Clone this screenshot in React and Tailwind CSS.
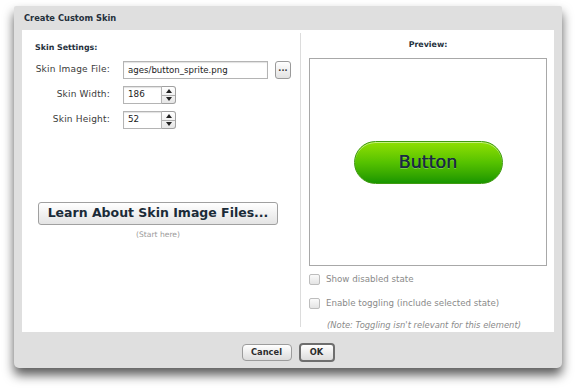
export default function App() {
  return (
    <div className="w-[575px] h-[390px] bg-white overflow-hidden font-['DejaVu_Sans',sans-serif]">
      <div className="flex">
        <div className="ml-[14px] mt-[6px] w-[548px] h-[362px] bg-[#dfdfdf] rounded-t-[2px] rounded-b-[5px] shadow-[0_7px_11px_rgba(0,0,0,0.65)] flex flex-col">

          {/* TITLE */}
          <div className="h-[24px] flex items-center pl-[10px] text-[8.3px] font-bold text-[#25303c]">
            Create Custom Skin
          </div>

          {/* BODY */}
          <div className="mx-[8px] h-[302px] bg-white flex">

            {/* LEFT */}
            <div className="w-[278px] flex flex-col pl-[13px] pt-[13px]">
              <div className="text-[7.9px] leading-[10px] font-bold text-[#25303c]">Skin Settings:</div>

              <div className="mt-[8px] grid grid-cols-[75px_auto] gap-x-[13px] gap-y-[7px] text-[9px] tracking-[0.2px] text-[#3a3a3a]">
                <div className="h-[18px] flex items-center justify-end">Skin Image File:</div>
                <div className="h-[18px] flex items-center gap-[7px]">
                  <div className="w-[145px] h-[18px] border border-[#b4b4b4] shadow-[inset_0_1px_1px_rgba(0,0,0,0.12)] flex items-center pl-[4px] text-[8.6px] tracking-normal text-[#222]">
                    ages/button_sprite.png
                  </div>
                  <div className="w-[16px] h-[18px] rounded-[3px] border border-[#9a9a9a] bg-gradient-to-b from-white to-[#e2e2e2] flex items-center justify-center text-[8px] font-bold leading-none pb-[3px] text-[#333]">
                    ...
                  </div>
                </div>

                <div className="h-[18px] flex items-center justify-end">Skin Width:</div>
                <Spin value="186" />

                <div className="h-[18px] flex items-center justify-end">Skin Height:</div>
                <Spin value="52" />
              </div>

              <button className="mt-[73px] ml-[3px] w-[240px] h-[23px] rounded-[3px] border border-[#a0a0a0] bg-gradient-to-b from-white to-[#e4e4e4] text-[12.5px] font-bold text-[#1b2b38] flex items-center justify-center">
                Learn About Skin Image Files...
              </button>
              <div className="ml-[3px] w-[240px] mt-[4px] text-center text-[7.6px] text-[#9a9a9a]">(Start here)</div>
            </div>

            {/* DIVIDER */}
            <div className="w-px bg-[#dcdcdc] mt-[3px] mb-[5px]" />

            {/* RIGHT */}
            <div className="flex-1 flex flex-col pl-[8px] pt-[10px]">
              <div className="w-[238px] text-center text-[7.9px] leading-[10px] font-bold text-[#25303c]">Preview:</div>
              <div className="mt-[8px] w-[238px] h-[208px] border border-[#a8a8a8] flex items-center justify-center">
                <div className="w-[149px] h-[43px] rounded-full border border-[#3f9a10] bg-gradient-to-b from-[#8fe003] via-[#55c200] to-[#179600] shadow-[inset_0_1px_0_rgba(255,255,255,0.5)] flex items-center justify-center text-[17.5px] text-[#1a2944] [text-shadow:0_0_0.4px_#1a2944,0_1px_0_rgba(255,255,255,0.3)]">
                  Button
                </div>
              </div>

              <div className="mt-[7px] flex items-center gap-[6px] text-[8.7px] text-[#8a8a8a]">
                <Check />
                <span>Show disabled state</span>
              </div>
              <div className="mt-[11px] flex items-center gap-[6px] text-[8.7px] text-[#8a8a8a]">
                <Check />
                <span>Enable toggling (include selected state)</span>
              </div>
              <div className="mt-[9px] ml-[18px] text-[8.4px] italic text-[#8a8a8a]">
                (Note: Toggling isn't relevant for this element)
              </div>
            </div>
          </div>

          {/* FOOTER */}
          <div className="flex-1 flex justify-center items-start pt-[11px] gap-[7px]">
            <button className="mt-[1px] w-[50px] h-[17px] rounded-[4px] border border-[#9c9c9c] bg-gradient-to-b from-white to-[#dcdcdc] text-[8.3px] font-bold text-[#2c2c2c] flex items-center justify-center">
              Cancel
            </button>
            <button className="w-[36px] h-[19px] rounded-[4px] border-2 border-[#6e6e6e] bg-gradient-to-b from-white to-[#dcdcdc] text-[8.3px] font-bold text-[#2c2c2c] flex items-center justify-center">
              OK
            </button>
          </div>
        </div>
      </div>
    </div>
  );
}

function Spin({ value }) {
  return (
    <div className="h-[18px] flex items-center">
      <div className="w-[39px] h-[18px] border border-[#b4b4b4] shadow-[inset_0_1px_1px_rgba(0,0,0,0.12)] flex items-center pl-[4px] text-[8.8px] tracking-normal text-[#222]">
        {value}
      </div>
      <div className="w-[14px] h-[18px] border border-l-0 border-[#a0a0a0] rounded-r-[3px] bg-gradient-to-b from-white to-[#e6e6e6] flex flex-col">
        <div className="flex-1 flex items-center justify-center border-b border-[#b0b0b0]">
          <svg width="6" height="4" viewBox="0 0 6 4"><path d="M3 0L6 4H0z" fill="#222" /></svg>
        </div>
        <div className="flex-1 flex items-center justify-center">
          <svg width="6" height="4" viewBox="0 0 6 4"><path d="M0 0H6L3 4z" fill="#222" /></svg>
        </div>
      </div>
    </div>
  );
}

function Check() {
  return (
    <div className="w-[11px] h-[11px] rounded-[2px] border border-[#bdbdbd] bg-gradient-to-b from-[#fafafa] to-[#e4e4e4]" />
  );
}
